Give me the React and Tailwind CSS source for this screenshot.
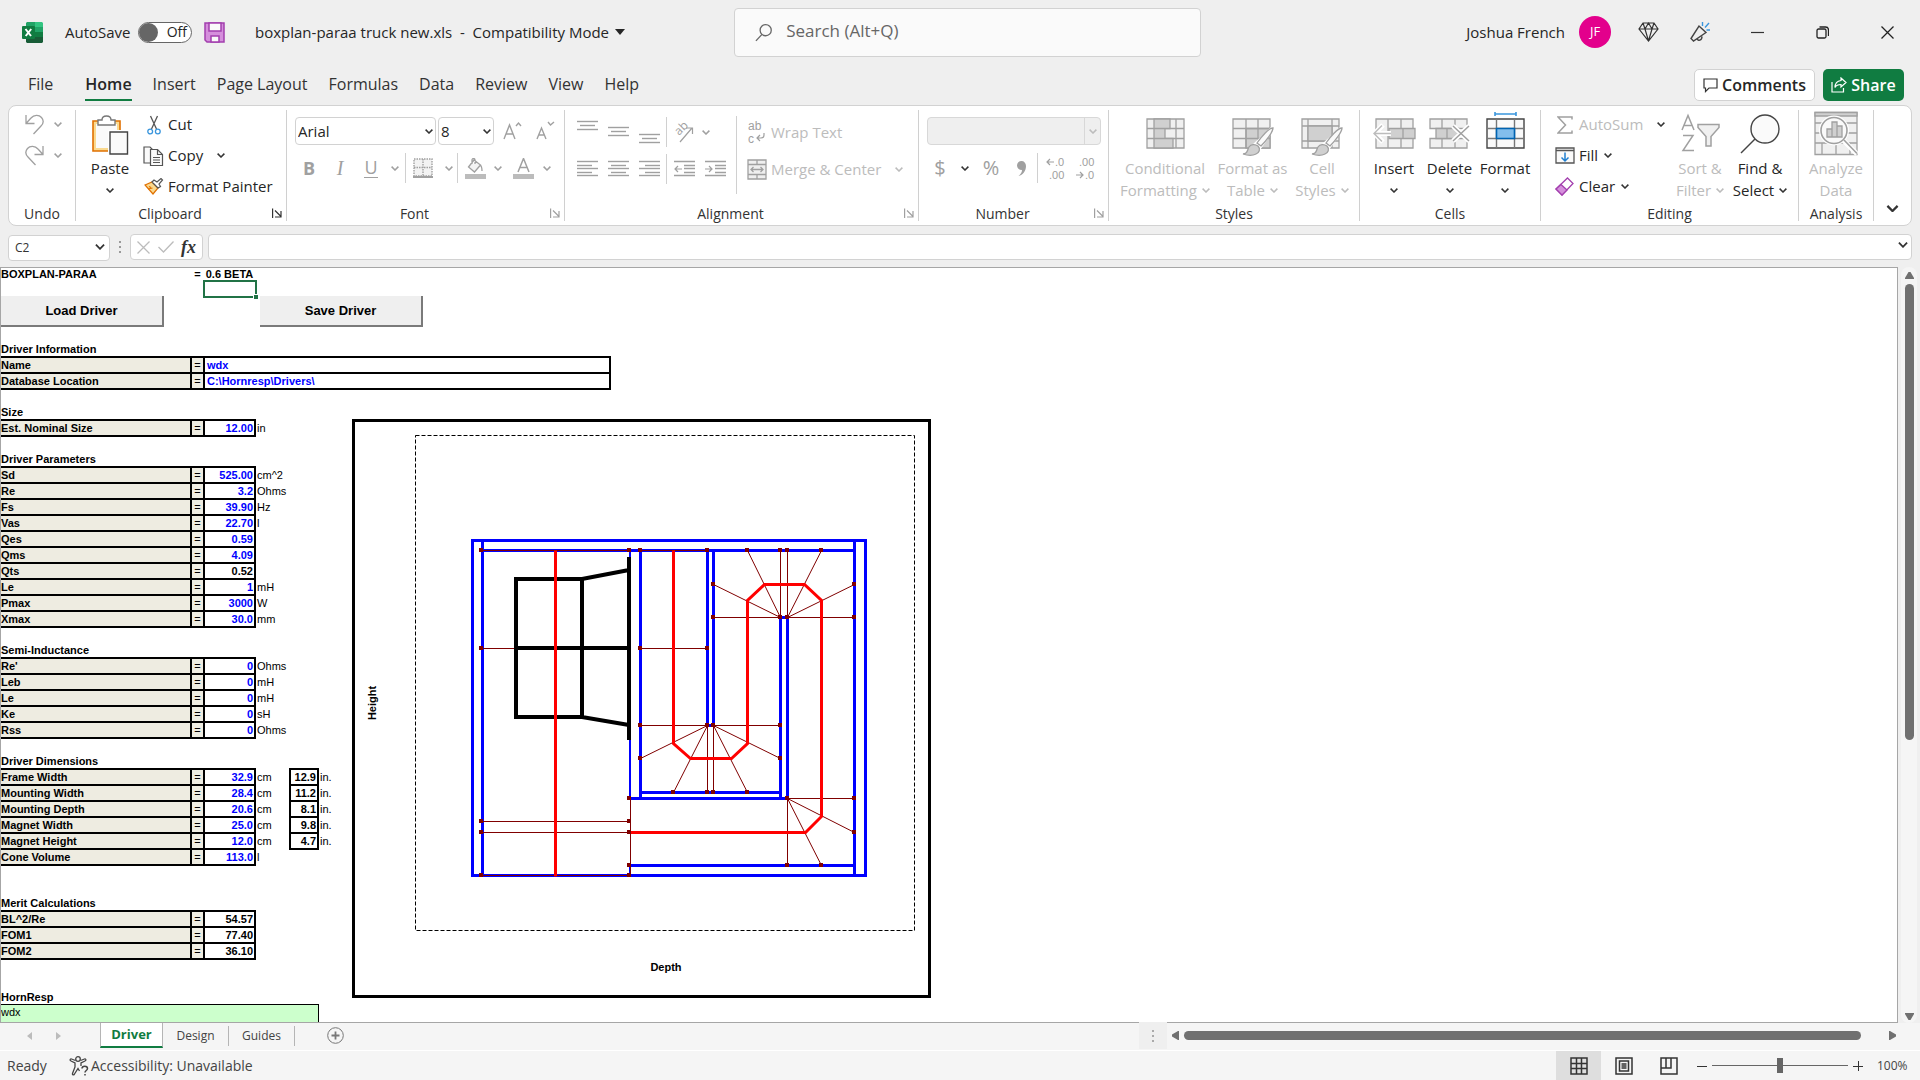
import { useState } from "react";

const GRAY = "#a0a0a0";
const LIGHT = "#bcbcbc";

const tabs = ["File", "Home", "Insert", "Page Layout", "Formulas", "Data", "Review", "View", "Help"];

const parameters = [
  { label: "Sd", value: "525.00", unit: "cm^2" },
  { label: "Re", value: "3.2", unit: "Ohms" },
  { label: "Fs", value: "39.90", unit: "Hz" },
  { label: "Vas", value: "22.70", unit: "l" },
  { label: "Qes", value: "0.59" },
  { label: "Qms", value: "4.09" },
  { label: "Qts", value: "0.52", computed: true },
  { label: "Le", value: "1", unit: "mH" },
  { label: "Pmax", value: "3000", unit: "W" },
  { label: "Xmax", value: "30.0", unit: "mm" },
];

const semiInductance = [
  { label: "Re'", value: "0", unit: "Ohms" },
  { label: "Leb", value: "0", unit: "mH" },
  { label: "Le", value: "0", unit: "mH" },
  { label: "Ke", value: "0", unit: "sH" },
  { label: "Rss", value: "0", unit: "Ohms" },
];

const dimensions = [
  { label: "Frame Width", value: "32.9", unit: "cm", inches: "12.9" },
  { label: "Mounting Width", value: "28.4", unit: "cm", inches: "11.2" },
  { label: "Mounting Depth", value: "20.6", unit: "cm", inches: "8.1" },
  { label: "Magnet Width", value: "25.0", unit: "cm", inches: "9.8" },
  { label: "Magnet Height", value: "12.0", unit: "cm", inches: "4.7" },
  { label: "Cone Volume", value: "113.0", unit: "l" },
];

const merit = [
  { label: "BL^2/Re", value: "54.57", computed: true },
  { label: "FOM1", value: "77.40", computed: true },
  { label: "FOM2", value: "36.10", computed: true },
];

/* ---------- small pieces ---------- */

function Chevron({ color = "#333", size = 8 }) {
  return (
    <svg width={size} height={size / 2 + 1} viewBox="0 0 8 5" fill="none" stroke={color} strokeWidth="1.5" className="shrink-0">
      <path d="M0.6 0.6 4 4 7.4 0.6" />
    </svg>
  );
}

function Launcher({ color = "#333" }) {
  return (
    <svg width="10" height="10" viewBox="0 0 10 10" fill="none" stroke={color} strokeWidth="1.2">
      <path d="M0.6 10V0.6M3 2.5 9 8.5M9 3v6H3" />
    </svg>
  );
}

function Sep() {
  return <div className="h-[30px] w-px shrink-0 bg-[#d0d0d0]" />;
}

function Group({ name, width, launcher, launcherColor, children }) {
  return (
    <section className={`my-1 flex shrink-0 flex-col border-r border-[#d0d0d0] ${width}`}>
      <div className="flex h-[97px]">{children}</div>
      <div className={`relative text-center text-sm leading-[14px] text-[#333] ${launcher ? "pr-[22px]" : ""}`}>
        {name}
        {launcher && (
          <button aria-label={`${name} settings`} className="absolute top-px right-1">
            <Launcher color={launcherColor} />
          </button>
        )}
      </div>
    </section>
  );
}

function BigButton({ icon, line1, line2, chevron, width, disabled }) {
  return (
    <button className={`flex shrink-0 flex-col items-center text-[15px] leading-[22px] whitespace-nowrap ${width} ${disabled ? "text-[#bcbcbc]" : "text-[#262626]"}`}>
      <span className="flex h-[47px]">{icon}</span>
      <span>{line1}</span>
      <span className="flex h-[22px] items-center gap-[5px]">
        {line2}
        {chevron && <Chevron color={disabled ? LIGHT : "#333"} />}
      </span>
    </button>
  );
}

function RowButton({ icon, label, chevron, gap = "gap-[6px]", disabled }) {
  return (
    <button className={`flex h-[31px] items-center pb-[2px] text-[15px] whitespace-nowrap ${gap} ${disabled ? "text-[#bcbcbc]" : "text-[#262626]"}`}>
      <span className="flex items-center gap-1">
        <span className="flex w-[21px] justify-center">{icon}</span>
        {label}
      </span>
      {chevron && <Chevron />}
    </button>
  );
}

function Slot({ width, label, children }) {
  return (
    <button aria-label={label} className={`flex h-[30px] shrink-0 items-center justify-center ${width}`}>
      {children}
    </button>
  );
}

/* ---------- icons ---------- */

function ExcelIcon() {
  return (
    <svg width="21" height="21" viewBox="0 0 21 21">
      <path d="M5 0h8v5H4V1z" fill="#21a366" />
      <path d="M13 0h7l1 1v4h-8z" fill="#33c481" />
      <path d="M4 5h9v5H4z" fill="#107c41" />
      <path d="M13 5h8v5h-8z" fill="#21a366" />
      <path d="M4 10h9v5H4z" fill="#185c37" />
      <path d="M13 10h8v5h-8z" fill="#107c41" />
      <path d="M4 15h17v5l-1 1H5l-1-1z" fill="#185c37" />
      <rect y="4" width="13" height="13" rx="1" fill="#107c41" />
      <path d="M3.500 7 9 14M9.200 7 3.700 14" stroke="#fff" strokeWidth="2" fill="none" />
    </svg>
  );
}

function SaveIcon() {
  return (
    <svg width="21" height="21" viewBox="0 0 21 21" stroke="#a33fae" strokeWidth="1.5" fill="#d58fdc">
      <path d="M1 1h19v19H3l-2-2z" />
      <path d="M5 1h12v8H5z" fill="#fafafa" />
      <path d="M7 20v-6h8v6z" fill="#fafafa" />
    </svg>
  );
}

function UndoIcon({ flip }) {
  return (
    <svg width="19" height="21" viewBox="0 0 19 21" fill="none" stroke={GRAY} strokeWidth="1.3" className={flip ? "-scale-x-100" : ""}>
      <path d="M1 1v8.500h8.500M1 9.500 6 4c3-3.500 8-3.500 10.500-.5s2 6-.5 8.500L8.500 20" />
    </svg>
  );
}

function PasteIcon() {
  return (
    <svg width="38" height="48" viewBox="0 0 38 48">
      <path d="M2 11h27v30H2z" fill="#fad98e" stroke="#e07000" strokeWidth="1.600" />
      <path d="M5 14h21v24H5z" fill="#fafafa" />
      <path d="M7 15v-5h4c0-3 2-4 4.500-4S20 7 20 10h4v5z" fill="#fff" stroke="#777" strokeWidth="1.400" />
      <path d="M17 20h21v25H17z" fill="#fff" />
      <path d="M19 22h17.500v22H19z" fill="#fafafa" stroke="#444" strokeWidth="1.400" />
    </svg>
  );
}

function CutIcon() {
  return (
    <svg width="14" height="20" viewBox="0 0 14 20" fill="none" strokeWidth="1.300">
      <path d="M3.500 1 9.500 14M10.500 1 4.500 14" stroke="#555" />
      <circle cx="3.200" cy="16.500" r="2.400" stroke="#3a96dd" />
      <circle cx="10.800" cy="16.500" r="2.400" stroke="#3a96dd" />
    </svg>
  );
}

function CopyIcon() {
  return (
    <svg width="21" height="20" viewBox="0 0 21 20" fill="#fafafa" stroke="#555" strokeWidth="1.200">
      <path d="M1 1h6l2 2v14H1z" />
      <path d="M7.500 3.500h7l5 5v11h-12z" />
      <path d="M14.500 3.500v5h5M10 11.500h7M10 14h7M10 16.500h7" fill="none" />
    </svg>
  );
}

function PainterIcon() {
  return (
    <svg width="20" height="17" viewBox="0 0 20 17" strokeWidth="1.200">
      <path d="M1 7 8 4l6 6-5 6z" fill="#fad98e" stroke="#e07000" />
      <path d="M5 8.500l2 1M4 11l4.500-1" fill="none" stroke="#e07000" />
      <path d="M8 4l2-2 3 2 4-3.500 1.500 1.500L15 6l1.500 2.500L14 10z" fill="#fff" stroke="#555" />
    </svg>
  );
}

function Lines({ rows }) {
  return (
    <svg width="21" height="28" viewBox="0 0 21 28" stroke={GRAY} strokeWidth="1.400">
      {rows.map(([x1, x2, y]) => (
        <path key={y} d={`M${x1} ${y}H${x2}`} />
      ))}
    </svg>
  );
}

const vAlign = [
  { label: "Top Align", rows: [[0, 21, 3.5], [3, 18, 7.5], [0, 21, 11.5]] },
  { label: "Middle Align", rows: [[0, 21, 9.5], [3, 18, 13.5], [0, 21, 17.5]] },
  { label: "Bottom Align", rows: [[0, 21, 16.5], [3, 18, 20.5], [0, 21, 24.5]] },
];

const hAlign = [
  { label: "Align Left", rows: [[0, 21, 6.5], [0, 15, 10.5], [0, 21, 13.5], [0, 15, 17.5], [0, 21, 20.5]] },
  { label: "Center", rows: [[0, 21, 6.5], [3, 18, 10.5], [0, 21, 13.5], [3, 18, 17.5], [0, 21, 20.5]] },
  { label: "Align Right", rows: [[0, 21, 6.5], [6, 21, 10.5], [0, 21, 13.5], [6, 21, 17.5], [0, 21, 20.5]] },
];

function IndentIcon({ out }) {
  return (
    <svg width="21" height="28" viewBox="0 0 21 28" stroke={GRAY} strokeWidth="1.400" fill="none">
      <path d="M0 6.500H21M10 10.500H21M10 13.500H21M10 17.500H21M0 20.500H21" />
      <path d={out ? "M8 14H1M4 11 1 14l3 3" : "M0 14H7M4 11l3 3-3 3"} strokeWidth="1.200" />
    </svg>
  );
}

function OrientationIcon() {
  return (
    <svg width="20" height="24" viewBox="0 0 20 24" fill="none" stroke={GRAY} strokeWidth="1.200" className="overflow-visible">
      <text transform="translate(5 16) rotate(-45)" fontSize="12" fill={GRAY} stroke="none">ab</text>
      <path d="M6 22 18 8M12 8h6.500v6" />
    </svg>
  );
}

function WrapIcon() {
  return (
    <svg width="20" height="28" viewBox="0 0 20 28" fill="none" stroke={GRAY} strokeWidth="1.200" className="overflow-visible">
      <g fontFamily="Liberation Sans" fontSize="12" fill={GRAY} stroke="none">
        <text x="1" y="12">ab</text>
        <text x="1" y="25">c</text>
      </g>
      <path d="M17 15v2c0 2-1 3-3 3h-4M13 17l-3 3 3 3" />
    </svg>
  );
}

function MergeIcon() {
  return (
    <svg width="20" height="21" viewBox="0 0 20 21" fill="#efefef" stroke={GRAY} strokeWidth="1.300">
      <path d="M1 1h18v19H1zM1 5.500h18M1 15.500h18M10 1v4.500M10 15.500V20" />
      <path d="M4 10.500h12M6.500 8 4 10.500 6.500 13M13.500 8l2.500 2.500-2.500 2.500" fill="none" />
    </svg>
  );
}

function BordersIcon() {
  return (
    <svg width="20" height="20" viewBox="0 0 20 20" fill="#f3f3f3" stroke={GRAY} strokeWidth="1.400">
      <path d="M1 1h18v17H1zM10 1v17M1 9.500h18" strokeDasharray="1.500 1" />
      <path d="M0 19H20" strokeWidth="2" />
    </svg>
  );
}

function FillColorIcon() {
  return (
    <svg width="21" height="21" viewBox="0 0 21 21" fill="#f3f3f3" stroke={GRAY} strokeWidth="1.300">
      <path d="M9 2 3.500 9l6 5 6-7zM7 6V2c0-2 3-2 3 0v4M15 7c2 1 2 3 2 6" />
      <path d="M0 16h21v5H0z" fill={LIGHT} stroke="none" />
    </svg>
  );
}

function FontColorIcon() {
  return (
    <svg width="21" height="21" viewBox="0 0 21 21">
      <path d="M5 14 10.500 0.500 16 14M7 9.500h7" fill="none" stroke={GRAY} strokeWidth="1.500" />
      <path d="M0 16h21v5H0z" fill={LIGHT} />
    </svg>
  );
}

function FontSizeIcon({ up }) {
  return (
    <svg width="19" height="20" viewBox="0 0 19 20" fill="none" stroke={GRAY} strokeWidth="1.400">
      {up ? <path d="M1 18 6.500 4 12 18M3 13h7M13 5l2.500-3L18 5" /> : <path d="M1 18 5.500 7 10 18M3 14h5M12 1l2.500 3L18 1" />}
    </svg>
  );
}

function DecimalIcon({ grow }) {
  return (
    <svg width="20" height="28" viewBox="0 0 20 28" fill="none" stroke={GRAY} strokeWidth="1.200" className="overflow-visible">
      <g fontFamily="Liberation Sans" fontSize="11" fill={GRAY} stroke="none">
        <text x={grow ? "9" : "3"} y="12">{grow ? ".0" : ".00"}</text>
        <text x={grow ? "3" : "9"} y="25">{grow ? ".00" : ".0"}</text>
      </g>
      <path d={grow ? "M8 8H1M4 5 1 8l3 3" : "M0 21h7M4 18l3 3-3 3"} />
    </svg>
  );
}

function Brush() {
  return (
    <g>
      <path d="M41 18 24 34l3 4z" fill="#fff" stroke="#fff" strokeWidth="4" />
      <path d="M41 18c-4 0-12 9-16 15l4 3c5-5 12-14 12-18z" fill="#fafafa" stroke={GRAY} strokeWidth="1.300" />
      <path d="M11 44c5 0 4-4 6-7s6-3 9-1c3 3 1 7-2 8-4 2-10 1-13 0z" fill="#d0d0d0" stroke={GRAY} strokeWidth="1.300" />
    </g>
  );
}

function ConditionalIcon() {
  return (
    <svg width="39" height="48" viewBox="0 0 39 48" fill="#f0f0f0" stroke={GRAY} strokeWidth="1.300">
      <path d="M1 9h37v29H1zM30 9v29M1 18.500h37M1 28.500h37" />
      <path d="M8 9h16v9.500H8zM8 18.500h11v10H8zM8 28.500h19V38H8z" fill="#d0d0d0" />
    </svg>
  );
}

function FormatTableIcon() {
  return (
    <svg width="42" height="48" viewBox="0 0 42 48" fill="#f0f0f0" stroke={GRAY} strokeWidth="1.300">
      <path d="M1 9h37v29H1z" />
      <path d="M14 18.500h24V38H14z" fill="#d0d0d0" />
      <path d="M14 9v29M26 9v29M1 18.500h37M1 28.500h37" />
      <Brush />
    </svg>
  );
}

function CellStylesIcon() {
  return (
    <svg width="42" height="48" viewBox="0 0 42 48" fill="#f0f0f0" stroke={GRAY} strokeWidth="1.300">
      <path d="M1 9h37v29H1zM1 16h37M1 31h37M7 9v29M31 9v29" />
      <path d="M7 16h24v15H7z" fill="#d0d0d0" />
      <Brush />
    </svg>
  );
}

function InsertIcon() {
  return (
    <svg width="43" height="48" viewBox="0 0 43 48" fill="#f0f0f0" stroke={GRAY} strokeWidth="1.300">
      <path d="M3 9h37v29H3zM15 9v29M28 9v29" />
      <path d="M16 18.500h26v10H16zM30 18.500v10" fill="#d0d0d0" />
      <path d="M18 23.500H1M10 15l-8.500 8.500L10 32" fill="none" stroke="#fff" strokeWidth="5" />
      <path d="M18 23.500H1M9 15.500l-8 8 8 8" fill="none" stroke={LIGHT} strokeWidth="1.500" />
    </svg>
  );
}

function DeleteIcon() {
  return (
    <svg width="41" height="48" viewBox="0 0 41 48" fill="#f0f0f0" stroke={GRAY} strokeWidth="1.300">
      <path d="M1 9h37v9.500H1zM1 28.500h37V38H1zM13 9v9.500M26 9v9.500M13 28.500V38M26 28.500V38" />
      <path d="M7 18.500h22v10H7zM18 18.500v10" fill="#d0d0d0" />
      <path d="M24 16l16 15M40 16 24 31" stroke="#fff" strokeWidth="5" />
      <path d="M24 16l16 15M40 16 24 31" stroke={GRAY} strokeWidth="1.500" />
    </svg>
  );
}

function FormatIcon() {
  return (
    <svg width="39" height="48" viewBox="0 0 39 48" fill="#fafafa" stroke="#444" strokeWidth="1.400">
      <path d="M9 4h21M9 2v4M30 2v4" stroke="#3a96dd" strokeWidth="1.600" />
      <path d="M1 9h37v29H1z" />
      <path d="M10.500 9v29M28.500 9v29M1 18.500h37M1 28.500h37" stroke="#777" />
      <path d="M10.500 18.500h18v10h-18z" fill="#83beec" stroke="#0063b1" strokeWidth="1.600" />
    </svg>
  );
}

function SortIcon() {
  return (
    <svg width="40" height="48" viewBox="0 0 40 48" fill="none" stroke={GRAY} strokeWidth="1.500">
      <path d="M2 20 8 5.500 14 20M4.500 15.500h7M3 25.500h10L3 40.500h11" />
      <path d="M18 14.500h21v3l-8 9v9.500h-5V26.500l-8-9z" fill="#f0f0f0" />
    </svg>
  );
}

function FindIcon() {
  return (
    <svg width="40" height="48" viewBox="0 0 40 48" fill="#fafafa" stroke="#444" strokeWidth="1.400">
      <circle cx="25" cy="19" r="14" />
      <path d="M15 29 1 43" />
    </svg>
  );
}

function AnalyzeIcon() {
  return (
    <svg width="44" height="48" viewBox="0 0 44 48" fill="#f0f0f0" stroke={GRAY} strokeWidth="1.300">
      <path d="M1 2.500h42v42H1zM1 13h42M1 23h42M1 33h42M8 33v11M22 33v11M36 33v11" />
      <path d="M1 2.500h42V6H1z" fill="#d0d0d0" />
      <path d="m30 31 13 13" stroke="#fff" strokeWidth="5" />
      <circle cx="20" cy="20.500" r="15" fill="#fff" stroke="none" />
      <circle cx="20" cy="20.500" r="13" fill="#fafafa" stroke={GRAY} strokeWidth="1.600" />
      <path d="M13 19h5v8h-5zM18 12h5v15h-5zM23 16h5v11h-5z" fill="#d0d0d0" />
      <path d="m30 30 13 13.500" strokeWidth="1.600" />
    </svg>
  );
}

function SigmaIcon() {
  return (
    <svg width="16" height="18" viewBox="0 0 16 18" fill="none" stroke={GRAY} strokeWidth="1.500">
      <path d="M15 3.500V1H1l7.500 8L1 17h14v-2.500" />
    </svg>
  );
}

function FillIcon() {
  return (
    <svg width="20" height="17" viewBox="0 0 20 17" fill="#fafafa" stroke="#555" strokeWidth="1.300">
      <path d="M1 1h18v15H1zM1 3.500h18" />
      <path d="M10 5.500V14M6.500 10.500 10 14l3.500-3.500" fill="none" stroke="#1f7fd0" strokeWidth="1.500" />
    </svg>
  );
}

function ClearIcon() {
  return (
    <svg width="19" height="19" viewBox="0 0 19 19" stroke="#a33fae" strokeWidth="1.300">
      <path d="M12.500 1 18 6.500 7 18 1 12z" fill="#fff" />
      <path d="m6 7.500 6 5.500-5 5-6-6z" fill="#d58fdc" />
    </svg>
  );
}

/* ---------- window chrome ---------- */

function TitleBar() {
  return (
    <header className="flex h-16 shrink-0 items-center text-[15px] text-[#262626]">
      <div className="flex flex-1 items-center pl-[22px]">
        <ExcelIcon />
        <span className="ml-[22px] w-[73px]">AutoSave</span>
        <button role="switch" aria-checked="false" className="flex h-[21px] w-[54px] items-center justify-between rounded-full border border-[#666] bg-white pr-1 text-sm leading-none">
          <span className="size-[19px] rounded-full bg-[#666]" />
          Off
        </button>
        <button aria-label="Save" className="ml-3">
          <SaveIcon />
        </button>
        <button className="ml-[30px] flex items-center gap-[6px] whitespace-pre">
          {"boxplan-paraa truck new.xls  -  Compatibility Mode"}
          <svg width="10" height="6" viewBox="0 0 10 6" fill="#262626">
            <path d="M0 0h10L5 6z" />
          </svg>
        </button>
      </div>
      <label className="ml-[18px] flex h-[49px] w-[467px] items-center gap-[14px] rounded border border-[#d2d2d2] bg-[#fafafa] pl-5">
        <svg width="19" height="19" viewBox="0 0 19 19" fill="none" stroke="#666" strokeWidth="1.400">
          <circle cx="11.500" cy="7" r="6" />
          <path d="M7.500 11.500 1 18.500" />
        </svg>
        <input type="text" placeholder="Search (Alt+Q)" className="w-full bg-transparent pb-[2px] text-[17px] outline-none placeholder:text-[#666]" />
      </label>
      <div className="flex flex-1 items-center justify-end pr-[26px]">
        <span>Joshua French</span>
        <span className="ml-[14px] flex size-8 items-center justify-center rounded-full bg-[#e3008c] text-[13px] text-white">JF</span>
        <button aria-label="Premium" className="ml-[27px]">
          <svg width="21" height="20" viewBox="0 0 21 20" fill="none" stroke="#333" strokeWidth="1.200">
            <path d="M5 1h11l4 6-9.500 12L1 7zM1 7h19M5 1l2 6 3.500 12L14 7l2-6M7 7l3.500-6L14 7" />
          </svg>
        </button>
        <button aria-label="Coming soon" className="ml-[31px]">
          <svg width="20" height="20" viewBox="0 0 20 20" fill="none" stroke="#444" strokeWidth="1.400">
            <path d="M1 16.500 9 4l7 6.500L3.500 19zM7 16.500c1 3 5 2 5-2" />
            <path d="M12.500 4V0M15 5.500 19 1M16.500 8H20" stroke="#3a96dd" />
          </svg>
        </button>
        <button aria-label="Minimize" className="ml-[41px]">
          <svg width="13" height="13" viewBox="0 0 13 13" stroke="#333" strokeWidth="1.200"><path d="M0 6.500h13" /></svg>
        </button>
        <button aria-label="Restore" className="ml-[52px]">
          <svg width="13" height="13" viewBox="0 0 13 13" fill="none" stroke="#222" strokeWidth="1.300">
            <rect x="1" y="3" width="9" height="9" rx="1.500" />
            <path d="M3.500 1h6c2 0 3 1 3 3v6" />
          </svg>
        </button>
        <button aria-label="Close" className="ml-[52px]">
          <svg width="13" height="13" viewBox="0 0 13 13" stroke="#222" strokeWidth="1.300"><path d="m0.500 0.500 12 12M12.500 0.500l-12 12" /></svg>
        </button>
      </div>
    </header>
  );
}

function RibbonTabs({ active, onSelect }) {
  return (
    <nav className="flex h-[41px] shrink-0 items-start pr-4 pl-7 text-base text-[#333]">
      {tabs.map((t) => (
        <button
          key={t}
          onClick={() => onSelect(t)}
          className={`mt-2 h-[29px] border-b-2 leading-6 ${t === "File" ? "mr-8" : "mr-[21px]"} ${t === active ? "border-[#107c41] font-semibold text-[#262626]" : "border-transparent"}`}
        >
          <span className="block pb-[3px]">{t}</span>
        </button>
      ))}
      <div className="ml-auto flex gap-2 pt-[5px] text-base font-semibold">
        <button className="flex h-8 w-[121px] items-center justify-center gap-1 rounded-[5px] border border-[#d2d2d2] bg-white text-[#262626]">
          <svg width="15" height="15" viewBox="0 0 15 15" fill="none" stroke="#333" strokeWidth="1.200">
            <path d="M1 1h13v9H6l-3.500 3.500V10H1z" />
          </svg>
          Comments
        </button>
        <button className="flex h-8 w-[81px] items-center justify-center gap-1 rounded-[5px] bg-[#107c41] text-white">
          <svg width="16" height="16" viewBox="0 0 16 16" fill="none" stroke="#fff" strokeWidth="1.200">
            <path d="M1 5v10h11.500v-4M10 1l5 4.500-5 4.500V7.500c-3 0-5 1-6 3 0-4 2-6.500 6-7z" />
          </svg>
          Share
        </button>
      </div>
    </nav>
  );
}

function Combo({ label, width, options }) {
  return (
    <div className={`relative ${width}`}>
      <select aria-label={label} className="h-7 w-full appearance-none rounded border border-[#d2d2d2] bg-white pl-[2px] text-[15px] leading-none text-[#262626]">
        {options.map((o) => (
          <option key={o}>{o}</option>
        ))}
      </select>
      <span className="pointer-events-none absolute inset-y-0 right-[3px] flex items-center">
        <Chevron />
      </span>
    </div>
  );
}

function Ribbon() {
  return (
    <div className="mx-2 flex h-[121px] shrink-0 rounded-lg border border-[#d2d2d2] bg-white">
      <Group name="Undo" width="w-[67px]">
        <div className="pl-4">
          <button aria-label="Undo" className="flex h-[31px] items-center gap-[10px] pb-[2px]"><UndoIcon /><Chevron color={GRAY} /></button>
          <button aria-label="Redo" className="flex h-[31px] items-center gap-[10px] pb-[2px]"><UndoIcon flip /><Chevron color={GRAY} /></button>
        </div>
      </Group>

      <Group name="Clipboard" width="w-[211px]" launcher>
        <div className="ml-[6px] flex">
          <BigButton icon={<PasteIcon />} line1="Paste" chevron width="w-14" />
        </div>
        <div className="ml-[5px]">
          <RowButton icon={<CutIcon />} label="Cut" />
          <RowButton icon={<CopyIcon />} label="Copy" chevron gap="gap-[14px]" />
          <RowButton icon={<PainterIcon />} label="Format Painter" />
        </div>
      </Group>

      <Group name="Font" width="w-[278px]" launcher launcherColor={GRAY}>
        <div className="pt-[7px] pl-2">
          <div className="flex items-center">
            <Combo label="Font" width="w-[141px]" options={["Arial"]} />
            <Combo label="Font size" width="ml-[2px] w-[56px]" options={["8"]} />
            <button aria-label="Increase font size" className="ml-[9px]"><FontSizeIcon up /></button>
            <button aria-label="Decrease font size" className="ml-[14px]"><FontSizeIcon /></button>
          </div>
          <div className="mt-2 flex items-center text-[#a0a0a0]">
            <Slot width="w-7" label="Bold"><span className="text-lg font-bold">B</span></Slot>
            <Slot width="w-[34px]" label="Italic"><span className="font-['Liberation_Serif',serif] text-xl italic">I</span></Slot>
            <Slot width="w-7" label="Underline"><span className="border-b border-[#a0a0a0] text-lg leading-[19px]">U</span></Slot>
            <Slot width="w-5" label="Underline options"><Chevron color={GRAY} /></Slot>
            <Sep />
            <Slot width="w-[34px]" label="Borders"><BordersIcon /></Slot>
            <Slot width="w-[17px]" label="Border options"><Chevron color={GRAY} /></Slot>
            <Sep />
            <Slot width="w-[34px]" label="Fill Color"><FillColorIcon /></Slot>
            <Slot width="w-3" label="Fill options"><Chevron color={GRAY} /></Slot>
            <Slot width="w-[38px]" label="Font Color"><FontColorIcon /></Slot>
            <Slot width="w-[10px]" label="Font color options"><Chevron color={GRAY} /></Slot>
          </div>
        </div>
      </Group>

      <Group name="Alignment" width="w-[354px]" launcher launcherColor={GRAY}>
        <div className="flex flex-col gap-[7px] pt-[7px] pl-3">
          <div className="flex h-[30px] items-center gap-[10px]">
            {vAlign.map((a) => (
              <button key={a.label} aria-label={a.label}><Lines rows={a.rows} /></button>
            ))}
            <div className="-ml-1"><Sep /></div>
            <button aria-label="Orientation" className="-ml-[3px] flex items-center gap-2"><OrientationIcon /><Chevron color={GRAY} /></button>
          </div>
          <div className="flex h-[30px] items-center gap-[10px]">
            {hAlign.map((a) => (
              <button key={a.label} aria-label={a.label}><Lines rows={a.rows} /></button>
            ))}
            <div className="-ml-1"><Sep /></div>
            <button aria-label="Decrease Indent" className="-ml-[3px]"><IndentIcon out /></button>
            <button aria-label="Increase Indent"><IndentIcon /></button>
          </div>
        </div>
        <div className="mt-[6px] ml-[10px] h-[78px] w-px bg-[#d0d0d0]" />
        <div className="flex flex-col gap-[7px] pt-[7px] pl-[10px] text-[15px] whitespace-nowrap text-[#bcbcbc]">
          <button className="flex h-[30px] items-center gap-1"><span className="w-5"><WrapIcon /></span>Wrap Text</button>
          <div className="flex h-[30px] items-center">
            <button className="flex items-center gap-1"><span className="w-5"><MergeIcon /></span>Merge &amp; Center</button>
            <button aria-label="Merge options" className="ml-[14px]"><Chevron color={LIGHT} /></button>
          </div>
        </div>
      </Group>

      <Group name="Number" width="w-[190px]" launcher launcherColor={GRAY}>
        <div className="pt-[7px] pl-2">
          <div className="relative w-[174px]">
            <select aria-label="Number format" disabled className="h-7 w-full appearance-none rounded border border-[#d8d8d8] bg-[#efefef]" />
            <span className="pointer-events-none absolute inset-y-px right-px flex w-4 items-center justify-center border-l border-[#d8d8d8]">
              <Chevron color={LIGHT} />
            </span>
          </div>
          <div className="mt-2 flex items-center text-[#a0a0a0]">
            <Slot width="w-[26px]" label="Accounting format"><span className="text-xl">$</span></Slot>
            <Slot width="w-6" label="Accounting options"><Chevron /></Slot>
            <Slot width="w-7" label="Percent"><span className="text-xl">%</span></Slot>
            <Slot width="w-8" label="Comma style">
              <svg width="9" height="15" viewBox="0 0 9 15" fill={GRAY}>
                <path d="M4.500 0C7 0 9 2 9 5c0 5-3 9-7.500 10C4 13 5 11 5 9 2 9 0 7 0 4.500S2 0 4.500 0z" />
              </svg>
            </Slot>
            <Sep />
            <Slot width="w-9" label="Increase Decimal"><DecimalIcon grow /></Slot>
            <Slot width="w-6" label="Decrease Decimal"><DecimalIcon /></Slot>
          </div>
        </div>
      </Group>

      <Group name="Styles" width="w-[251px]">
        <div className="flex pl-[6px]">
          <BigButton icon={<ConditionalIcon />} line1="Conditional" line2="Formatting" chevron disabled width="w-[100px]" />
          <BigButton icon={<FormatTableIcon />} line1="Format as" line2="Table" chevron disabled width="w-[75px]" />
          <BigButton icon={<CellStylesIcon />} line1="Cell" line2="Styles" chevron disabled width="w-16" />
        </div>
      </Group>

      <Group name="Cells" width="w-[181px]">
        <div className="flex pl-[6px]">
          <BigButton icon={<InsertIcon />} line1="Insert" chevron width="w-14" />
          <BigButton icon={<DeleteIcon />} line1="Delete" chevron width="w-[55px]" />
          <BigButton icon={<FormatIcon />} line1="Format" chevron width="w-14" />
        </div>
      </Group>

      <Group name="Editing" width="w-[258px]">
        <div className="w-[129px] pl-[13px]">
          <RowButton icon={<SigmaIcon />} label="AutoSum" chevron disabled gap="gap-[14px]" />
          <RowButton icon={<FillIcon />} label="Fill" chevron />
          <RowButton icon={<ClearIcon />} label="Clear" chevron />
        </div>
        <BigButton icon={<SortIcon />} line1="Sort &amp;" line2="Filter" chevron disabled width="w-[60px]" />
        <BigButton icon={<FindIcon />} line1="Find &amp;" line2="Select" chevron width="w-[60px]" />
      </Group>

      <Group name="Analysis" width="w-[75px]">
        <BigButton icon={<AnalyzeIcon />} line1="Analyze" line2="Data" disabled width="w-full" />
      </Group>

      <button aria-label="Collapse ribbon" className="flex flex-1 items-end justify-center pb-[13px]">
        <Chevron size={13} />
      </button>
    </div>
  );
}

function FormulaBar() {
  return (
    <div className="mx-2 mt-2 mb-[7px] flex h-[26px] shrink-0 items-center">
      <div className="relative h-full w-[102px]">
        <input aria-label="Name box" defaultValue="C2" className="h-full w-full rounded border border-[#d2d2d2] bg-white pl-[6px] text-xs text-[#333]" />
        <span className="pointer-events-none absolute inset-y-0 right-[5px] flex items-center"><Chevron size={10} /></span>
      </div>
      <span className="flex w-5 flex-col items-center gap-[3px]">
        <i className="size-[2px] bg-[#999]" />
        <i className="size-[2px] bg-[#999]" />
        <i className="size-[2px] bg-[#999]" />
      </span>
      <div className="flex h-full w-[73px] items-center justify-between rounded border border-[#d2d2d2] bg-white px-[6px]">
        <button aria-label="Cancel">
          <svg width="13" height="13" viewBox="0 0 13 13" stroke={LIGHT} strokeWidth="1.300"><path d="m0.500 0.500 12 12M12.500 0.500l-12 12" /></svg>
        </button>
        <button aria-label="Enter">
          <svg width="16" height="12" viewBox="0 0 16 12" fill="none" stroke={LIGHT} strokeWidth="1.300"><path d="m0.500 6 5 5L15.500 0.500" /></svg>
        </button>
        <button className="font-['Liberation_Serif',serif] text-lg leading-none font-bold text-[#333] italic">fx</button>
      </div>
      <div className="relative ml-[5px] h-full flex-1">
        <input aria-label="Formula" className="h-full w-full rounded border border-[#d2d2d2] bg-white px-2" />
        <span className="pointer-events-none absolute inset-y-0 right-1 flex items-center pb-1"><Chevron size={10} /></span>
      </div>
    </div>
  );
}

/* ---------- worksheet ---------- */

function Heading({ children }) {
  return <h2 className="h-[14px] text-[11px] leading-[14px] font-bold">{children}</h2>;
}

const box = "border-2 border-black";

function DataTable({ title, rows }) {
  const hasInches = rows.some((r) => r.inches);
  return (
    <>
      <Heading>{title}</Heading>
      <table aria-label={title} className="w-[350px] table-fixed border-collapse text-[11px] leading-3">
        <colgroup>
          <col className="w-[190px]" />
          <col className="w-[13px]" />
          <col className="w-[51px]" />
          <col className="w-[35px]" />
          <col className="w-[28px]" />
          <col />
        </colgroup>
        <tbody>
          {rows.map((r) => (
            <tr key={r.label} className="h-4">
              <th scope="row" className="border-y-2 border-r-2 border-black bg-[#eeece1] p-0 text-left font-bold">{r.label}</th>
              <td className={`${box} bg-[#eeece1] p-0 text-center`}>=</td>
              <td className={`${box} bg-white p-0 pr-px text-right font-bold ${r.computed ? "" : "text-[#0000ff]"}`}>{r.value}</td>
              <td className="p-0 pl-px whitespace-nowrap">{r.unit}</td>
              {hasInches && (
                <>
                  <td className={r.inches ? `${box} p-0 pr-px text-right font-bold` : "p-0"}>{r.inches}</td>
                  <td className="p-0 pl-px">{r.inches ? "in." : ""}</td>
                </>
              )}
            </tr>
          ))}
        </tbody>
      </table>
    </>
  );
}

function SheetButton({ children }) {
  return (
    <button className="h-[31px] w-[163px] border-r-2 border-b-2 border-[#7a7a7a] bg-[#efefef] text-[13px] font-bold">
      {children}
    </button>
  );
}

const blue = [
  "M120 121H513V456H120z",
  "M130 121V456M502 121V456M130 131H502",
  "M288 131V379M288 373H428M278 379H435M278 446H502",
  "M355 131V306H361V131",
  "M428 379V198H435V379",
];

const red = [
  "M203 131V457",
  "M321 131V324L338 339H379L395 324V181L412 165H452L469 181V397L453 413H278",
];

const thin = [
  "M130 131H277M288 131H355M130 229H164M288 229H355",
  "M361 198H428M361 165 428 198M395 131 428 198M428 131V198",
  "M502 198H435M502 165 435 198M469 131 435 198M435 131V198",
  "M288 306H355M288 339 355 306M321 373 355 306M355 373V306",
  "M428 306H361M428 339 361 306M395 373 361 306M361 373V306",
  "M435 379H502M435 379 502 413M435 379 469 446M435 379V446",
  "M278 379V456M130 402H277M130 413H277M130 456H277",
];

const dots = [
  [129, 131], [277, 131], [288, 131], [355, 131], [395, 131], [428, 131], [435, 131], [469, 131],
  [129, 229], [288, 229], [355, 229],
  [361, 165], [502, 165], [361, 198], [428, 198], [435, 198], [502, 198],
  [288, 306], [355, 306], [361, 306], [428, 306], [288, 339], [428, 339],
  [321, 373], [355, 373], [361, 373], [395, 373],
  [277, 379], [435, 379], [502, 379], [129, 402], [277, 402], [129, 413], [277, 413], [502, 413],
  [277, 446], [435, 446], [469, 446], [129, 456], [277, 456],
];

function BoxChart() {
  return (
    <svg width="579" height="579" viewBox="0 0 579 579" fill="none" role="img" aria-label="Box plan, height against depth" className="mt-[14px] shrink-0">
      <rect x="1.500" y="1.500" width="576" height="576" stroke="#000" strokeWidth="3" />
      <rect x="63.500" y="16.500" width="499" height="495" stroke="#000" strokeDasharray="4 2" />
      {/* half-pixel shift keeps the odd-width strokes sharp */}
      <g transform="translate(0.5 0.5)">
        <g stroke="#0000ff" strokeWidth="3">
          {blue.map((d) => <path key={d} d={d} />)}
          <path d="M277.500 131V379M277.500 446V456" strokeWidth="2" />
        </g>
        <g stroke="#800000" strokeWidth="1">
          {thin.map((d) => <path key={d} d={d} />)}
        </g>
      </g>
      <path d="M277 160V321M277 138V160M164 158V300M230 160V298M162 160H230L277 151M164 229H277M162 298H230L277 306" stroke="#000" strokeWidth="4" />
      <g transform="translate(0.5 0.5)" stroke="#ff0000" strokeWidth="3">
        {red.map((d) => <path key={d} d={d} />)}
      </g>
      <g fill="#800000">
        {dots.map(([x, y]) => <rect key={`${x}-${y}`} x={x - 2} y={y - 2} width="4" height="4" />)}
      </g>
      <g fill="#000" fontSize="11" fontWeight="bold" textAnchor="middle">
        <text x="314" y="552">Depth</text>
        <text transform="translate(24 284) rotate(-90)">Height</text>
      </g>
    </svg>
  );
}

function Sheet() {
  return (
    <main className="min-w-0 flex-1 overflow-hidden border border-[#a6a6a6] bg-white font-['Liberation_Sans',Arial,sans-serif] text-black">
      <div className="flex h-[13px] text-[11px] leading-[13px] font-bold">
        <span className="w-[190px]">BOXPLAN-PARAA</span>
        <span className="w-[13px] text-center">=</span>
        <span className="w-[51px] text-center whitespace-nowrap">0.6 BETA</span>
      </div>
      {/* active cell */}
      <div className="relative -mt-px ml-[202px] h-[18px] w-[54px] border-2 border-[#217346]">
        <i className="absolute -right-[3px] -bottom-[3px] size-[5px] border-t border-l border-white bg-[#217346]" />
      </div>
      <div className="-mt-[2px] flex gap-24">
        <SheetButton>Load Driver</SheetButton>
        <SheetButton>Save Driver</SheetButton>
      </div>

      <div className="mt-[15px]">
        <Heading>Driver Information</Heading>
        <table aria-label="Driver Information" className="w-[610px] table-fixed border-collapse text-[11px] leading-3 font-bold">
          <colgroup>
            <col className="w-[190px]" />
            <col className="w-[13px]" />
            <col />
          </colgroup>
          <tbody>
            {[["Name", "wdx"], ["Database Location", "C:\\Hornresp\\Drivers\\"]].map(([label, value]) => (
              <tr key={label} className="h-4">
                <th scope="row" className="border-y-2 border-r-2 border-black bg-[#eeece1] p-0 text-left">{label}</th>
                <td className={`${box} bg-[#eeece1] p-0 text-center font-normal`}>=</td>
                <td className={`${box} p-0 pl-[2px] text-[#0000ff]`}>{value}</td>
              </tr>
            ))}
          </tbody>
        </table>
      </div>

      <div className="mt-[15px] flex gap-px">
        <div>
          <DataTable title="Size" rows={[{ label: "Est. Nominal Size", value: "12.00", unit: "in" }]} />
          <div className="mt-[15px]"><DataTable title="Driver Parameters" rows={parameters} /></div>
          <div className="mt-[15px]"><DataTable title="Semi-Inductance" rows={semiInductance} /></div>
          <div className="mt-[15px]"><DataTable title="Driver Dimensions" rows={dimensions} /></div>
          <div className="mt-[30px]"><DataTable title="Merit Calculations" rows={merit} /></div>
          <div className="mt-[30px]"><Heading>HornResp</Heading></div>
          <div className="h-8 w-[318px] border border-l-0 border-black bg-[#ccffcc] text-[11px] leading-[15px]">wdx</div>
        </div>
        <BoxChart />
      </div>
    </main>
  );
}

function VerticalScroll() {
  return (
    <div className="flex w-[22px] shrink-0 justify-center">
      <div className="flex w-4 flex-col items-center rounded-lg bg-[#f5f5f5] pt-[5px] pb-[3px]">
        <svg width="9" height="7" viewBox="0 0 9 7" fill="#707070"><path d="M3.500 0h2L9 6v1H0V6z" /></svg>
        <div className="mt-[5px] h-[61%] w-[9px] rounded-full bg-[#707070]" />
        <svg width="9" height="7" viewBox="0 0 9 7" fill="#707070" className="mt-auto"><path d="M3.500 7h2L9 1V0H0v1z" /></svg>
      </div>
    </div>
  );
}

function SheetTabs() {
  return (
    <div className="flex h-[27px] shrink-0 items-center bg-[#f5f5f5] pb-[2px] text-xs text-[#444]">
      <div className="flex w-[100px] items-center gap-[24px] pl-[27px]">
        <svg width="5" height="8" viewBox="0 0 5 8" fill={LIGHT}><path d="M5 0v8L0 4z" /></svg>
        <svg width="5" height="8" viewBox="0 0 5 8" fill={LIGHT}><path d="M0 0v8l5-4z" /></svg>
      </div>
      <button className="h-[25px] w-[63px] border-x border-b-2 border-x-[#b5b5b5] border-b-[#107c41] bg-white text-[13px] font-bold text-[#107c41]">Driver</button>
      <button className="h-5 w-[66px] border-r border-[#b5b5b5]">Design</button>
      <button className="h-5 w-[66px] border-r border-[#b5b5b5]">Guides</button>
      <button aria-label="New sheet" className="ml-8">
        <svg width="17" height="17" viewBox="0 0 17 17" fill="none" stroke="#777">
          <circle cx="8.500" cy="8.500" r="7.800" />
          <path d="M8.500 4.500v8M4.500 8.500h8" strokeWidth="1.800" />
        </svg>
      </button>
      <div className="ml-auto flex h-[27px] w-7 flex-col items-center justify-center gap-[3px] bg-[#efefef]">
        <i className="size-[2px] bg-[#aaa]" />
        <i className="size-[2px] bg-[#aaa]" />
        <i className="size-[2px] bg-[#aaa]" />
      </div>
      <div className="mr-[19px] flex w-[734px] items-center px-[5px]">
        <svg width="7" height="9" viewBox="0 0 7 9" fill="#707070"><path d="M7 0v9H6L0 5.500v-2L6 0z" /></svg>
        <div className="mr-[28px] ml-[5px] h-[9px] flex-1 rounded-full bg-[#707070]" />
        <svg width="7" height="9" viewBox="0 0 7 9" fill="#707070"><path d="M0 0v9h1l6-3.500v-2L1 0z" /></svg>
      </div>
    </div>
  );
}

function StatusBar() {
  return (
    <footer className="flex h-[30px] shrink-0 items-center border-t border-white bg-[#f5f5f5] pl-[7px] text-sm text-[#444]">
      <span className="w-[62px]">Ready</span>
      <button className="flex items-center gap-[2px]">
        <svg width="20" height="20" viewBox="0 0 20 20" fill="none" stroke="#444" strokeWidth="1.300">
          <circle cx="9" cy="3" r="2.300" />
          <path d="M6.500 4.500 2.500 3c-1.500-.5-2 1.500-.5 2l4 2v4l-2.500 6.500c-.5 1.500 1.500 2 2 .5L9 12.500l1.500 2.500M11.500 4.500 15.500 3c1.500-.5 2 1.500.5 2l-4 2v3" />
          <path d="M13 12.500c0-3 5.500-3 5.500 0 0 2-2.500 2-2.500 4M16 18v1.500" strokeWidth="1.500" />
        </svg>
        Accessibility: Unavailable
      </button>
      <div className="ml-auto flex h-full items-center">
        <button aria-label="Normal view" className="flex h-full w-[45px] items-center justify-center bg-[#dedede]">
          <svg width="18" height="18" viewBox="0 0 18 18" fill="none" stroke="#333" strokeWidth="1.500">
            <path d="M1 1h16v16H1zM6.500 1v16M11.500 1v16M1 6.500h16M1 11.500h16" />
          </svg>
        </button>
        <button aria-label="Page layout view" className="flex w-[45px] items-center justify-center">
          <svg width="18" height="18" viewBox="0 0 18 18" fill="none" stroke="#333" strokeWidth="1.500">
            <path d="M1 1h16v16H1zM4.500 4h9v10h-9zM6.500 7h5M6.500 9h5M6.500 11h5" />
          </svg>
        </button>
        <button aria-label="Page break view" className="flex w-[45px] items-center justify-center">
          <svg width="18" height="18" viewBox="0 0 18 18" fill="none" stroke="#333" strokeWidth="1.500">
            <path d="M1 1h16v16H1zM1 11h10V1M6 1v10" />
          </svg>
        </button>
        <button aria-label="Zoom out" className="ml-[6px]">
          <svg width="10" height="10" viewBox="0 0 10 10" stroke="#333"><path d="M0 5.500h10" /></svg>
        </button>
        <input
          type="range"
          aria-label="Zoom"
          defaultValue="50"
          className="mx-[5px] h-4 w-[136px] appearance-none bg-transparent [&::-webkit-slider-runnable-track]:h-px [&::-webkit-slider-runnable-track]:bg-[#666] [&::-webkit-slider-thumb]:-mt-[7px] [&::-webkit-slider-thumb]:h-[15px] [&::-webkit-slider-thumb]:w-[6px] [&::-webkit-slider-thumb]:appearance-none [&::-webkit-slider-thumb]:bg-[#666]"
        />
        <button aria-label="Zoom in">
          <svg width="10" height="10" viewBox="0 0 10 10" stroke="#333"><path d="M0 5.500h10M5.500 0v10" /></svg>
        </button>
        <button className="ml-[14px] w-[43px] text-left text-xs">100%</button>
      </div>
    </footer>
  );
}

export default function App() {
  const [activeTab, setActiveTab] = useState("Home");

  return (
    <div className="flex h-screen flex-col overflow-hidden bg-[#efefef] font-['Open_Sans','Noto_Sans',sans-serif]">
      <TitleBar />
      <RibbonTabs active={activeTab} onSelect={setActiveTab} />
      <Ribbon />
      <FormulaBar />
      <div className="flex min-h-0 flex-1">
        <Sheet />
        <VerticalScroll />
      </div>
      <SheetTabs />
      <StatusBar />
    </div>
  );
}
